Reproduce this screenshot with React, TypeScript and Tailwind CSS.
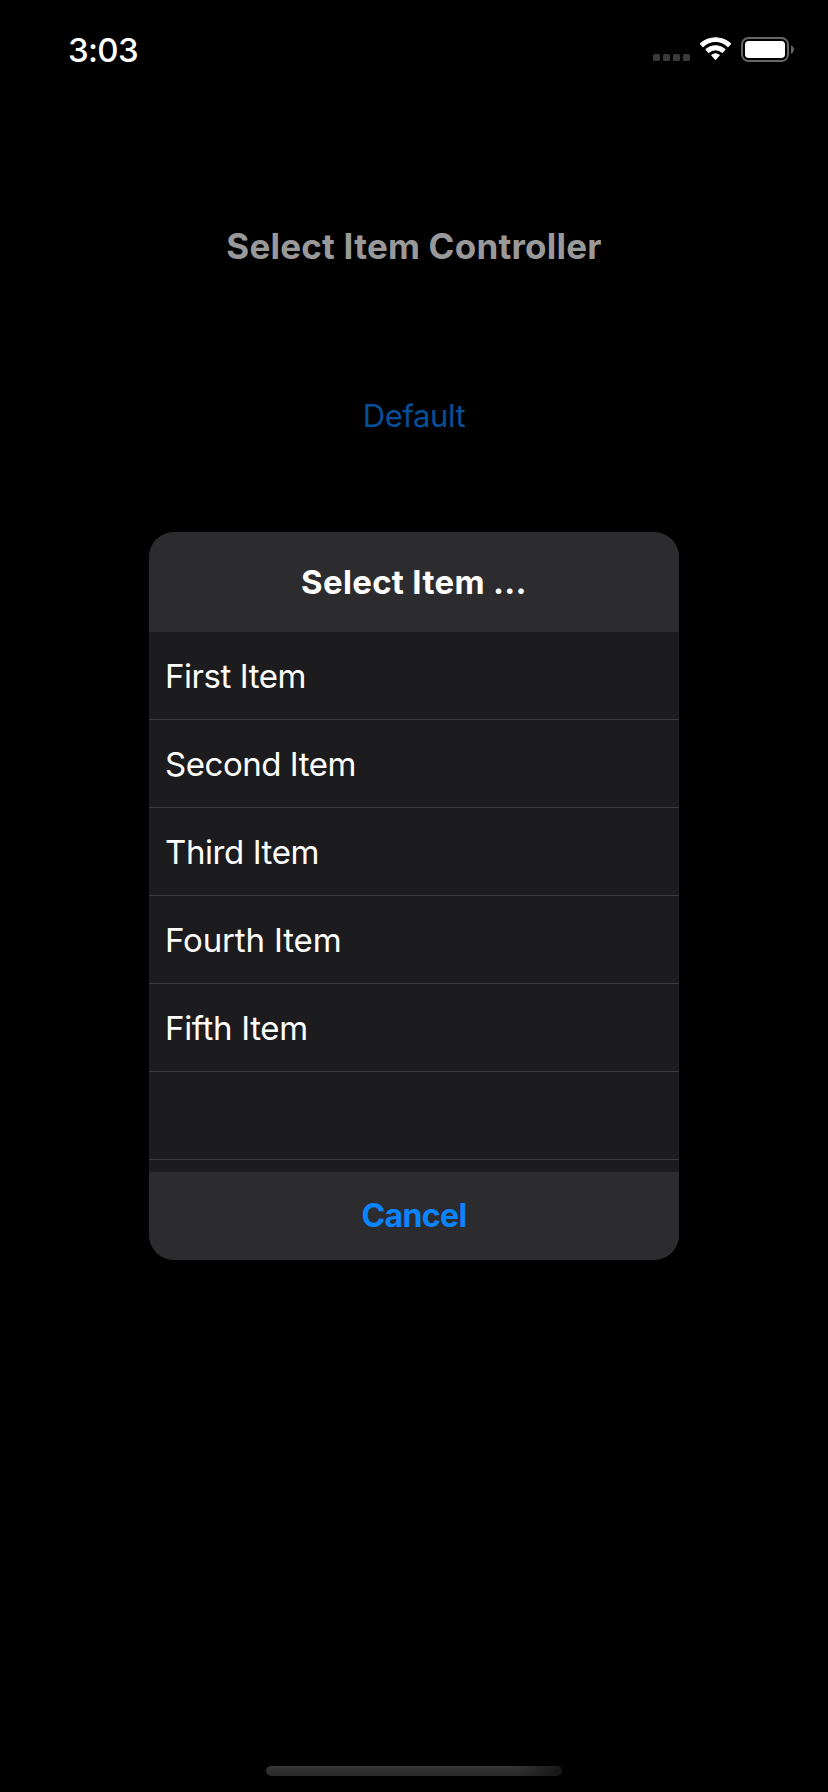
const items = [
  { label: "First Item", tracking: "tracking-[-0.43px]" },
  { label: "Second Item", tracking: "tracking-[-0.46px]" },
  { label: "Third Item", tracking: "tracking-[-0.42px]" },
  { label: "Fourth Item", tracking: "tracking-[-0.14px]" },
  { label: "Fifth Item", tracking: "tracking-[-0.33px]" },
  { label: "", tracking: "" },
];

function StatusBar() {
  return (
    <header className="flex h-[98px] shrink-0 items-center justify-between pr-[33px] pl-[68px]">
      <time className="pt-0.5 text-[33px] leading-none font-medium tracking-[-0.7px]">3:03</time>
      <svg width="142" height="26" viewBox="0 0 142 26" className="block" aria-hidden="true">
        <g fill="#3a3a3b">
          <rect x="0" y="18" width="7" height="7" rx="1.6" />
          <rect x="10" y="18" width="7" height="7" rx="1.6" />
          <rect x="20" y="18" width="7" height="7" rx="1.6" />
          <rect x="30" y="18" width="7" height="7" rx="1.6" />
        </g>
        <g fill="#fff" stroke="#fff" strokeWidth="1.2" strokeLinejoin="round">
          <path d="M47.4 7.7 A22.2 22.2 0 0 1 77.6 7.7 L75 10.5 A18 18 0 0 0 50 10.5 Z" />
          <path d="M53 13.4 A14.2 14.2 0 0 1 72 13.4 L69.3 16.3 A10 10 0 0 0 55.7 16.3 Z" />
          <path d="M58.8 19.2 A6 6 0 0 1 66.2 19.2 L62.5 23.4 Z" />
        </g>
        <rect x="89" y="2" width="46" height="23" rx="6.5" fill="none" stroke="#666" strokeWidth="2" />
        <rect x="92" y="5" width="40" height="17" rx="3.8" fill="#fff" />
        <path d="M138 9.2 C141.9 11 141.9 16 138 17.8 Z" fill="#666" />
      </svg>
    </header>
  );
}

function SelectDialog() {
  return (
    <section className="mt-[87px] flex w-[530px] shrink-0 flex-col self-center overflow-hidden rounded-[25px] bg-[#1c1c1e]">
      <h2 className="flex h-[100px] items-center justify-center bg-[#2c2c2e] text-[33px] leading-none font-bold tracking-[0.3px]">
        Select Item ...
      </h2>
      <ul className="h-[540px]">
        {items.map((item, i) => (
          <li
            key={i}
            className={`flex h-[88px] items-center border-b border-[#3d3d41] pt-0.5 pl-4 text-[33px] leading-none ${item.tracking}`}
          >
            {item.label}
          </li>
        ))}
      </ul>
      <button className="flex h-[88px] items-center justify-center bg-[#2c2c2e] text-[32px] leading-none font-bold tracking-[-0.6px] text-[#0a84ff]">
        Cancel
      </button>
    </section>
  );
}

export default function App() {
  return (
    <main className="flex h-[1792px] w-[828px] flex-col overflow-hidden bg-black font-[Inter,sans-serif] text-white">
      <StatusBar />
      <h1 className="mt-[118px] flex h-[60px] items-center justify-center text-[35px] leading-none font-bold tracking-[0.22px] text-[#999]">
        Select Item Controller
      </h1>
      <button className="mt-[109px] flex h-[60px] items-center justify-center text-[31px] leading-none tracking-[-0.42px] text-[#064f99]">
        Default
      </button>
      <SelectDialog />
      <div className="mt-auto mb-4 h-2.5 w-[296px] self-center overflow-hidden rounded-full bg-linear-to-b from-[#353535] to-[#292929]">
        <div className="h-full bg-linear-to-r from-transparent from-85% to-black/55" />
      </div>
    </main>
  );
}
